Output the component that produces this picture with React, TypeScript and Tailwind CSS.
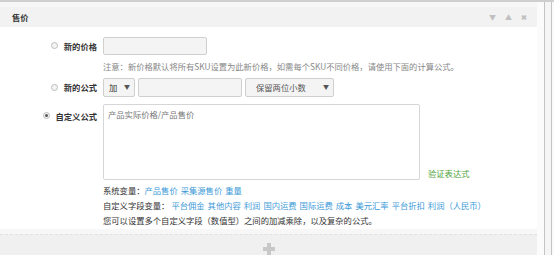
import React from "react";

function Radio({ checked }: { checked?: boolean }) {
  return (
    <span className="w-[7px] h-[7px] rounded-full border border-[#bdbdbd] bg-[#f4f4f4] flex items-center justify-center shrink-0">
      {checked && <span className="w-[3px] h-[3px] rounded-full bg-[#555]" />}
    </span>
  );
}

function Label({ text, checked }: { text: string; checked?: boolean }) {
  return (
    <div className="w-[97px] flex justify-end items-center gap-[6px] shrink-0">
      <Radio checked={checked} />
      <span className="font-bold text-[#333]">{text}</span>
    </div>
  );
}

const customVars = ["平台佣金", "其他内容", "利润", "国内运费", "国际运费", "成本", "美元汇率", "平台折扣", "利润（人民币）"];
const sysVars = ["产品售价", "采集源售价", "重量"];

export default function App() {
  return (
    <div className="w-[554px] h-[255px] overflow-hidden flex bg-[#f7f7f7] border-t-2 border-[#cfcfcf] text-[8.3px] leading-[10px] font-['Noto_Sans_CJK_SC','Noto_Sans',sans-serif]">
      <div className="w-[537px] shrink-0 flex flex-col pt-[5px]">
        <div className="h-[20px] bg-[#f2f2f2] flex items-center pl-[12px] pr-[10px]">
          <span className="font-bold text-[#333]">售价</span>
          <div className="ml-auto flex items-center gap-[9px] text-[#c0c0c0] text-[7px]">
            <span>▼</span>
            <span>▲</span>
            <span className="font-bold">✖</span>
          </div>
        </div>
        <div className="bg-white h-[206px] pt-[10px]">
          <div className="flex items-center h-[18px]">
            <Label text="新的价格" />
            <div className="ml-[6px] w-[104px] h-[18px] bg-[#f4f4f4] border border-[#cfcfcf] rounded-[2px]" />
          </div>
          <div className="mt-[6px] pl-[103px] text-[#888]">
            注意：新价格默认将所有SKU设置为此新价格，如需每个SKU不同价格，请使用下面的计算公式。
          </div>
          <div className="mt-[7px] flex items-center h-[19px]">
            <Label text="新的公式" />
            <div className="ml-[6px] w-[32px] h-[19px] bg-[#f4f4f4] border border-[#cfcfcf] rounded-[2px] flex items-center pl-[5px] pr-[4px] text-[#333]">
              <span>加</span>
              <span className="ml-auto text-[6px] text-[#555]">▼</span>
            </div>
            <div className="ml-[3px] w-[104px] h-[19px] bg-[#f4f4f4] border border-[#cfcfcf] rounded-[2px]" />
            <div className="ml-[3px] w-[89px] h-[19px] bg-[#f4f4f4] border border-[#cfcfcf] rounded-[2px] flex items-center pl-[10px] pr-[4px] text-[#555]">
              <span>保留两位小数</span>
              <span className="ml-auto text-[6px] text-[#555]">▼</span>
            </div>
          </div>
          <div className="mt-[7px] flex">
            <div className="pt-[7px]">
              <Label text="自定义公式" checked />
            </div>
            <div className="ml-[6px] w-[317px] h-[76px] bg-white border border-[#d6d6d6] rounded-[2px] px-[4px] pt-[4px] text-[#777]">
              产品实际价格/产品售价
            </div>
            <div className="ml-[8px] self-end mb-[2px] text-[#4fa33a]">验证表达式</div>
          </div>
          <div className="mt-[3px] pl-[103px] leading-[15px] text-[#333]">
            <div className="flex">
              <span>系统变量：</span>
              {sysVars.map((v) => (
                <span key={v} className="text-[#3d9ad8] mr-[3px]">{v}</span>
              ))}
            </div>
            <div className="flex">
              <span className="mr-[2px]">自定义字段变量：</span>
              {customVars.map((v, i) => (
                <span key={i} className="text-[#3d9ad8] mr-[3px]">{v}</span>
              ))}
            </div>
            <div>您可以设置多个自定义字段（数值型）之间的加减乘除，以及复杂的公式。</div>
          </div>
        </div>
        <div className="h-[5px]" />
        <div className="flex-1 bg-[#f0f0f0] border-t border-dashed border-[#e2e2e2] flex justify-center pt-[8px]">
          <svg width="12" height="12" viewBox="0 0 12 12">
            <rect x="4" y="0" width="4" height="12" fill="#c8c8c8" />
            <rect x="0" y="4" width="12" height="4" fill="#c8c8c8" />
          </svg>
        </div>
      </div>
      <div className="w-[7px] bg-[#fbfbfb]" />
      <div className="w-[7px] border-l border-[#c4c4c4] bg-[#f5f5f5]" />
      <div className="flex-1 border-l border-[#c4c4c4] bg-[#fafafa]" />
    </div>
  );
}
